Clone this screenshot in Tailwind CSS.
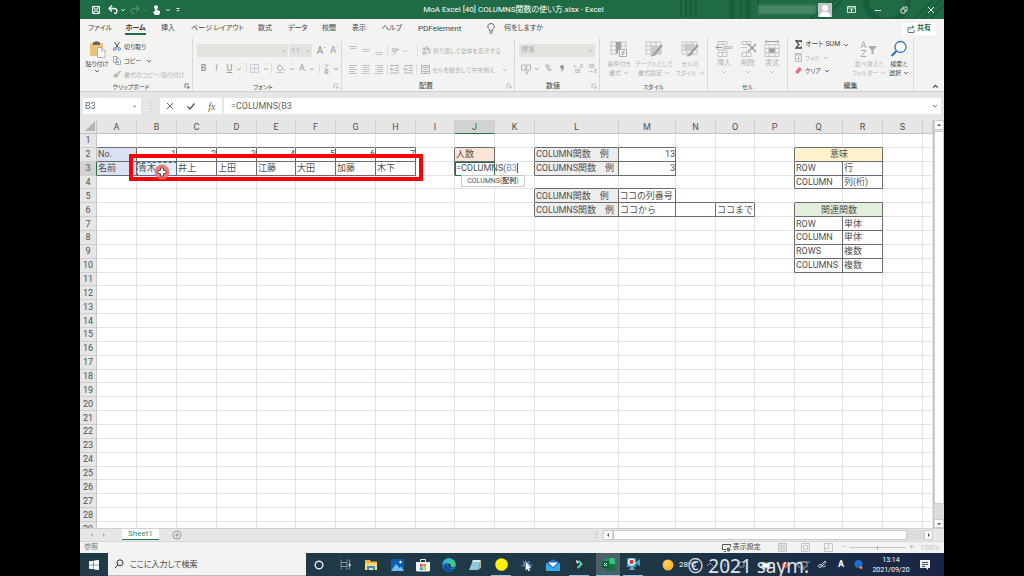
<!DOCTYPE html>
<html lang="ja">

<head>
    <meta charset="UTF-8">
    <meta name="viewport" content="width=device-width, initial-scale=1.0">
    <title>MoA Excel [40] COLUMNS関数の使い方.xlsx - Excel</title>
    <script src="https://cdn.jsdelivr.net/npm/@tailwindcss/browser@4"></script>
</head>

<body class="bg-black">

    <!-- Shared icons -->
    <svg class="hidden">
        <symbol id="chev" viewBox="0 0 6 6"><path d="M1 2l2 2 2-2" fill="none" stroke="currentColor" stroke-width=".8" /></symbol>
        <symbol id="launch" viewBox="0 0 6 6"><path d="M1 5V1h4M3 3l2 2M5 3v2H3" fill="none" stroke="currentColor" stroke-width=".8" /></symbol>
        <symbol id="grid" viewBox="0 0 18 18"><path d="M1 2h15v12H1zM1 6h15M1 10h15M6 2v12M11 2v12" fill="#f4f2f4" stroke="#c4c2c4" stroke-width="1" /></symbol>
        <symbol id="brush" viewBox="0 0 18 18"><path d="M17 5l-6 7" stroke="#8f8f8f" stroke-width="1.6" /><path d="M11 11c-3 0-3 4-6 5 3 1 7 0 7-4z" fill="#a9a7a9" /></symbol>
    </svg>

    <div class="relative mx-20 flex h-screen flex-col overflow-hidden bg-[#e6e6e6] font-['Roboto','Noto_Sans_CJK_JP',sans-serif] text-[7px] leading-[9px] text-[#444]">

        <!-- Title bar -->
        <header class="relative flex h-[19px] shrink-0 items-center bg-[#1e6b46] text-white">
            <svg class="absolute right-0 top-0 h-full w-[270px]" viewBox="0 0 270 19" fill="none" stroke="#195c3b" preserveAspectRatio="none">
                <path d="M7 0v17M12 0v17M17 0v17M22 0v17M67 0v19M84 0v12" stroke-width="2" />
                <path d="M58 0v19M74 0v19" stroke-width="5" />
                <path d="M137 19l19-19M143 19l19-19M149 19l19-19M240 19l19-19M248 19l19-19M256 19l14-14" stroke-width="2" />
                <path d="M192 0a20 20 0 0 0 42 0" stroke-width="6" />
            </svg>
            <div class="flex flex-1 items-center gap-1 pl-3">
                <button aria-label="上書き保存"><svg class="h-2 w-2" viewBox="0 0 8 8" fill="none" stroke="currentColor"><path d="M.5.5h7v7h-7zM2 1v2h4V1M2 7.500V5h4v2.500" /></svg></button>
                <button aria-label="元に戻す" class="ml-1 flex items-center"><svg class="h-[9px] w-[10px]" viewBox="0 0 10 9" fill="none" stroke="currentColor" stroke-width="1.300"><path d="M4 .5L1 3.500l3 3M1.500 3.500H6c4 0 4 5 0 5" /></svg><svg class="ml-0.5 size-[6px]"><use href="#chev" /></svg></button>
                <button aria-label="やり直し" class="flex items-center text-[#4d8d6c]"><svg class="h-[9px] w-[10px]" viewBox="0 0 10 9" fill="none" stroke="currentColor" stroke-width="1.300"><path d="M6 .5l3 3-3 3M8.500 3.500H4c-4 0-4 5 0 5" /></svg><svg class="ml-0.5 size-[6px]"><use href="#chev" /></svg></button>
                <button aria-label="タッチ" class="flex items-center"><svg class="h-[10px] w-[9px]" viewBox="0 0 9 10" fill="currentColor"><circle cx="4" cy="2.200" r="2" /><path d="M3 2h2v3l3 1v2l-1 2H3L1 7l2-1z" /></svg><svg class="ml-1 size-[6px]"><use href="#chev" /></svg></button>
                <button aria-label="カスタマイズ"><svg class="size-[6px]" viewBox="0 0 6 6" fill="currentColor"><path d="M1.500 1h3v1h-3zM1.500 3h3L3 4.500z" /></svg></button>
            </div>
            <h1 class="relative whitespace-nowrap text-[8px] [font-feature-settings:'palt']">MoA Excel [40] COLUMNS関数の使い方.xlsx - Excel</h1>
            <div class="relative flex flex-1 items-center justify-end pr-[9px]">
                <div class="h-[9px] w-[58px] bg-[#4a8668] blur-[1px]"></div>
                <svg class="ml-[2px] size-[14px]" viewBox="0 0 14 14"><path d="M0 0h14v14H0z" fill="#c4c4c4" /><circle cx="7" cy="5" r="3" fill="#fff" /><path d="M1.500 14c0-7 11-7 11 0z" fill="#fff" /></svg>
                <button aria-label="リボンの表示" class="ml-[15px]"><svg class="size-[9px]" viewBox="0 0 9 9" fill="none" stroke="currentColor"><path d="M.5 1.500h8v6h-8zM.5 3h8M4.500 7V4M3 5.500L4.500 4 6 5.500" stroke-width=".8" /></svg></button>
                <button aria-label="最小化" class="ml-[18px]"><svg class="size-[8px]" viewBox="0 0 8 8" stroke="currentColor"><path d="M1 4.500h6" /></svg></button>
                <button aria-label="元のサイズ" class="ml-[18px]"><svg class="size-[8px]" viewBox="0 0 8 8" fill="none" stroke="currentColor"><path d="M1 3h4v4H1zM3 3V1h4v4H5" stroke-width=".8" /></svg></button>
                <button aria-label="閉じる" class="ml-[19px]"><svg class="size-[8px]" viewBox="0 0 8 8" stroke="currentColor"><path d="M1 1l6 6M7 1L1 7" /></svg></button>
            </div>
        </header>

        <!-- Ribbon tabs -->
        <nav class="flex h-[19px] shrink-0 items-center bg-[#f3f3f1] pl-2 pr-2">
            <div class="grid flex-1 grid-cols-[37px_36px_30px_67px_30px_34px_30px_30px_36px_69px_17px_auto] items-center whitespace-nowrap text-[7px] [font-feature-settings:'palt']">
                <a href="#">ファイル</a>
                <a href="#" class="relative w-[21px] text-center font-bold text-[#333] after:absolute after:-bottom-[2px] after:left-0 after:h-[2px] after:w-full after:bg-[#1e6b46]">ホーム</a>
                <a href="#">挿入</a>
                <a href="#">ページ レイアウト</a>
                <a href="#">数式</a>
                <a href="#">データ</a>
                <a href="#">校閲</a>
                <a href="#">表示</a>
                <a href="#">ヘルプ</a>
                <a href="#" class="text-[8px]">PDFelement</a>
                <svg class="h-[11px] w-[8px]" viewBox="0 0 8 11" fill="none" stroke="#555" stroke-width=".9"><path d="M2.500 8V6.500C-.8 4 1 .6 4 .6s4.800 3.400 1.500 5.900V8zM2.500 10h3" /></svg>
                <a href="#">何をしますか</a>
            </div>
            <button class="flex h-3 w-[34px] items-center justify-center gap-[2px] bg-white font-bold text-[#1e6b46]">
                <svg class="size-[8px]" viewBox="0 0 8 8" fill="none" stroke="currentColor" stroke-width=".8"><path d="M3 2.500H1v5h6V5M3 5c0-2 1-3 4-3M5 .5L7 2 5 3.500" /></svg>共有
            </button>
        </nav>

        <!-- Ribbon -->
        <section class="relative flex h-[54px] shrink-0 whitespace-nowrap border-b border-[#d0d0d0] bg-[#f3f3f1] text-[6px] text-[#b3b1b3] [font-feature-settings:'palt']">
            <!-- Clipboard -->
            <div class="relative flex w-[113px] flex-col border-r border-[#d8d8d6]">
                <div class="flex flex-1 gap-1 pl-[5px] pt-[2px]">
                    <button class="flex w-6 flex-col items-center text-[#444]">
                        <svg class="h-[18px] w-[17px]" viewBox="0 0 17 18"><path d="M1 3h13v13H1z" fill="#efc27a" /><path d="M4 2h2a1.600 1.600 0 0 1 3 0h2v3H4z" fill="#666" /><path d="M8.500 7.500h4l3.500 3.500v6.500H8.500z" fill="#fff" stroke="#999" stroke-width=".7" /><path d="M12.500 7.500V11H16" fill="none" stroke="#999" stroke-width=".7" /></svg>
                        <span class="mt-px">貼り付け</span>
                        <svg class="size-[6px]"><use href="#chev" /></svg>
                    </button>
                    <div class="flex flex-col gap-[5px] pt-[2px]">
                        <button class="flex items-center gap-[3px] text-[#444]"><svg class="h-[9px] w-2" viewBox="0 0 8 9" fill="none"><path d="M1.500 0l4 6M6.500 0l-4 6" stroke="#555" /><circle cx="1.800" cy="7" r="1.300" stroke="#4a8ac6" /><circle cx="6.200" cy="7" r="1.300" stroke="#4a8ac6" /></svg>切り取り</button>
                        <button class="flex items-center gap-[3px] text-[#444]"><svg class="h-[9px] w-2" viewBox="0 0 8 9" fill="#fff" stroke="#7d8a97" stroke-width=".7"><path d="M.5.5H4v6H.5zM3 2.500h2.500l2 2v4H3z" /><path d="M4 5.500h2M4 7h2" stroke="#4a8ac6" /></svg>コピー<svg class="ml-[2px] size-[6px]"><use href="#chev" /></svg></button>
                        <button class="flex items-center gap-[3px]"><svg class="h-[9px] w-2" viewBox="0 0 8 9"><path d="M7.500 1l-3 3" stroke="#aaa" stroke-width="1.500" /><path d="M3 3l3 2.500L3 8 0 6z" fill="#b5b5b5" /></svg>書式のコピー/貼り付け</button>
                    </div>
                </div>
                <div class="pr-[10px] text-center text-[#444]">クリップボード</div>
                <svg class="absolute bottom-[2px] right-[2px] size-[6px] text-[#555]"><use href="#launch" /></svg>
            </div>

            <!-- Font -->
            <div class="relative flex w-[149px] flex-col border-r border-[#d8d8d6]">
                <div class="flex flex-1 flex-col gap-[6px] pl-[4px] pt-[6px]">
                    <div class="flex h-[13px] items-center">
                        <select aria-label="フォント" class="h-[13px] w-[92px] appearance-none border-r border-[#f3f3f1] bg-[#e3e2de]"><option></option></select>
                        <svg class="-ml-[8px] mr-[2px] size-[6px]"><use href="#chev" /></svg>
                        <select aria-label="サイズ" class="h-[13px] w-[23px] appearance-none bg-[#e3e2de] pl-[2px] text-[8px]"><option>11</option></select>
                        <svg class="-ml-[7px] size-[6px]"><use href="#chev" /></svg>
                        <button class="ml-[4px] w-[13px] text-[10px] text-[#8f8f8f]">A<sup class="text-[6px]">ˆ</sup></button>
                        <button class="w-[13px] text-[9px] text-[#8f8f8f]">A<sup class="text-[6px]">ˇ</sup></button>
                    </div>
                    <div class="flex h-[11px] items-center text-[9px] text-[#999]">
                        <button class="w-[13px] font-bold">B</button>
                        <button class="w-[13px] italic">I</button>
                        <button class="w-[13px] underline">U</button>
                        <svg class="size-[6px]"><use href="#chev" /></svg>
                        <i class="ml-1 h-[11px] w-px bg-[#ddd]"></i>
                        <button aria-label="罫線" class="ml-[3px] flex items-center gap-1"><svg class="size-[9px]" viewBox="0 0 9 9" fill="none" stroke="#c9c5d2"><path d="M.5.5h8v8h-8zM4.500.5v8M.5 4.500h8" stroke-width=".9" /></svg><svg class="size-[6px]"><use href="#chev" /></svg></button>
                        <i class="ml-[2px] h-[11px] w-px bg-[#ddd]"></i>
                        <button aria-label="塗りつぶし" class="ml-1 flex items-center gap-1"><svg class="size-[9px]" viewBox="0 0 9 9" fill="none" stroke="#aaa"><path d="M1 4l3-3 3 3-3 3zM2.500 2V.5M8 5v2" /><path d="M0 8.500h8" stroke="#ccc" /></svg><svg class="size-[6px]"><use href="#chev" /></svg></button>
                        <button class="ml-1 flex items-center gap-1">A<svg class="size-[6px]"><use href="#chev" /></svg></button>
                        <i class="ml-1 h-[11px] w-px bg-[#ddd]"></i>
                        <button class="ml-1 flex items-center gap-1 text-[5px] leading-[5px] text-[#888]"><span>ア<br>亜</span><svg class="size-[6px]"><use href="#chev" /></svg></button>
                    </div>
                </div>
                <div class="pr-2 text-center text-[#444]">フォント</div>
                <svg class="absolute bottom-[2px] right-[2px] size-[6px]"><use href="#launch" /></svg>
            </div>

            <!-- Alignment -->
            <div class="relative flex w-[173px] flex-col border-r border-[#d8d8d6]">
                <div class="flex flex-1 flex-col gap-2 pl-[7px] pt-[7px]">
                    <div class="flex h-[11px] items-center">
                        <svg class="h-[11px] w-[38px]" viewBox="0 0 38 11" stroke="#b5b5b5" fill="none"><path d="M0 1.500h8M1 3.500h6M13 4.500h8M14 6.500h6M26 7.500h8M27 9.500h6" stroke-width=".8" /></svg>
                        <i class="h-[11px] w-px bg-[#ddd]"></i>
                        <button aria-label="方向" class="ml-[3px] flex items-center gap-[2px]"><svg class="size-[9px]" viewBox="0 0 9 9" fill="none" stroke="#aaa"><circle cx="2.500" cy="4" r="1.500" /><path d="M2 8.500l6-6M5 2l1.500 3" /></svg><svg class="size-[6px]"><use href="#chev" /></svg></button>
                        <i class="ml-[9px] h-[11px] w-px bg-[#ddd]"></i>
                        <button class="ml-[4px] flex items-center gap-[2px]"><svg class="size-[9px]" viewBox="0 0 9 9" fill="none" stroke="#aaa" stroke-width=".9"><circle cx="1.800" cy="3" r="1.200" /><path d="M3 1.500v3M5 0v4h2V2H5M1 6h3v2H1zM8 4v3H5.500" /></svg>折り返して全体を表示する</button>
                    </div>
                    <div class="flex h-[11px] items-center">
                        <svg class="h-[11px] w-[38px]" viewBox="0 0 38 11" stroke="#b5b5b5" fill="none"><path d="M0 1.500h8M0 3.500h6M0 5.500h8M0 7.500h6M0 9.500h8M13 1.500h8M14 3.500h6M13 5.500h8M14 7.500h6M13 9.500h8M26 1.500h8M28 3.500h6M26 5.500h8M28 7.500h6M26 9.500h8" stroke-width=".8" /></svg>
                        <i class="h-[11px] w-px bg-[#ddd]"></i>
                        <svg class="ml-[2px] h-[9px] w-[24px]" viewBox="0 0 24 9" stroke="#aaa" fill="none"><path d="M0 .5h9M5 3h4M5 5.500h4M0 8h9M4 4.250H0l2-2M0 4.250l2 2M14 .5h9M19 3h4M19 5.500h4M14 8h9M13 4.250h4l-2-2M17 4.250l-2 2" stroke-width=".9" /></svg>
                        <i class="ml-[2px] h-[11px] w-px bg-[#ddd]"></i>
                        <button class="ml-[4px] flex items-center gap-[2px]"><svg class="size-[9px]" viewBox="0 0 9 9" fill="none" stroke="#aaa6b5" stroke-width=".8"><path d="M.5.5h8v8h-8zM.5 2.500h8M.5 6.500h8M4.500.5v2M4.500 6.500v2M2 4.500h5" /></svg>セルを結合して中央揃え<svg class="ml-[5px] size-[6px]"><use href="#chev" /></svg></button>
                    </div>
                </div>
                <div class="pr-1 text-center text-[7px] text-[#444]">配置</div>
                <svg class="absolute bottom-[2px] right-[2px] size-[6px]"><use href="#launch" /></svg>
            </div>

            <!-- Number -->
            <div class="relative flex w-[85px] flex-col border-r border-[#d8d8d6]">
                <div class="flex flex-1 flex-col gap-[6px] px-[4px] pt-[6px]">
                    <div class="flex h-[13px] items-center">
                        <select aria-label="表示形式" class="h-[13px] w-full appearance-none bg-[#e3e2de] pl-[2px] text-[7px]"><option>標準</option></select>
                        <svg class="-ml-[8px] size-[6px] shrink-0"><use href="#chev" /></svg>
                    </div>
                    <div class="flex h-[11px] items-center text-[9px] text-[#999]">
                        <button aria-label="通貨" class="ml-[2px] flex items-center gap-[3px]"><svg class="size-[10px]" viewBox="0 0 10 10" fill="none" stroke="#aaa" stroke-width=".9"><path d="M.5 1h9v5h-9z" /><circle cx="5" cy="3.500" r="1.200" /><path d="M4 8h4M5 9.500h2" /></svg><svg class="size-[6px]"><use href="#chev" /></svg></button>
                        <button class="ml-[5px]">%</button>
                        <button aria-label="桁区切り" class="ml-[8px]"><svg class="h-[7px] w-[4px]" viewBox="0 0 4 7"><path d="M0 2a2 2 0 1 1 4 0c0 2-1 4-3 5l1-3a2 2 0 0 1-2-2z" fill="#999" /></svg></button>
                        <i class="ml-[6px] h-[11px] w-px bg-[#ddd]"></i>
                        <button class="ml-1 text-left text-[5px] leading-[5px]">←.0<br>.00</button>
                        <button class="ml-[5px] text-left text-[5px] leading-[5px]">.00<br>→.0</button>
                    </div>
                </div>
                <div class="pr-2 text-center text-[7px] text-[#444]">数値</div>
                <svg class="absolute bottom-[2px] right-[2px] size-[6px]"><use href="#launch" /></svg>
            </div>

            <!-- Styles -->
            <div class="flex w-[108px] flex-col border-r border-[#d8d8d6]">
                <div class="grid flex-1 grid-cols-[32px_38px_34px] pl-[3px] pt-[2px]">
                    <button class="flex flex-col items-center"><svg class="size-[18px]" viewBox="0 0 18 18"><use href="#grid" /><path d="M6 2h5v8H8v3H6z" fill="#a3a1a3" /><path d="M9.500 9.500h7v7h-7z" fill="#fff" stroke="#aaa" /><path d="M11 12h4M11 14h4M14 10.500l-2 5" stroke="#999" stroke-width=".8" /></svg><span class="mt-px">条件付き</span><span class="flex items-center gap-[2px]">書式<svg class="size-[6px]"><use href="#chev" /></svg></span></button>
                    <button class="flex flex-col items-center"><svg class="size-[18px]" viewBox="0 0 18 18"><use href="#grid" /><path d="M6 6h10v8H6z" fill="#cbc9cb" /><use href="#brush" /></svg><span class="mt-px">テーブルとして</span><span class="flex items-center gap-[2px]">書式設定<svg class="size-[6px]"><use href="#chev" /></svg></span></button>
                    <button class="flex flex-col items-center"><svg class="size-[18px]" viewBox="0 0 18 18"><use href="#grid" /><path d="M3 4h11v7H3z" fill="#cbc9cb" /><use href="#brush" /></svg><span class="mt-px">セルの</span><span class="flex items-center gap-[2px]">スタイル<svg class="size-[6px]"><use href="#chev" /></svg></span></button>
                </div>
                <div class="text-center text-[#444]">スタイル</div>
            </div>

            <!-- Cells -->
            <div class="flex w-[80px] flex-col border-r border-[#d8d8d6]">
                <div class="grid flex-1 grid-cols-[24px_24px_24px] pl-[4px] pt-[2px]">
                    <button class="flex flex-col items-center"><svg class="size-[18px]" viewBox="0 0 18 18" fill="none" stroke="#c4c4c4"><path d="M3 1.500h9v3H3zM7.500 1.500v3M3 12.500h9v4H3zM7.500 10v6.500M3 10h9v2.500" /><path d="M8 6.500h9v2H8z" fill="#ddd" /><path d="M7 7.500H1l3-3M1 7.500l3 3" stroke="#999" /></svg><span class="mt-px text-[7px]">挿入</span><svg class="mt-px size-[6px]"><use href="#chev" /></svg></button>
                    <button class="flex flex-col items-center"><svg class="size-[18px]" viewBox="0 0 18 18" fill="none" stroke="#c4c4c4"><path d="M3 1.500h9v3H3zM7.500 1.500v3M3 12.500h9v4H3zM7.500 10v6.500M1 7.500h7" /><path d="M9 4l8 8M17 4l-8 8" stroke="#999" stroke-width="1.300" /></svg><span class="mt-px text-[7px]">削除</span><svg class="mt-px size-[6px]"><use href="#chev" /></svg></button>
                    <button class="flex flex-col items-center"><svg class="size-[18px]" viewBox="0 0 18 18" fill="none" stroke="#c4c4c4"><path d="M2 4.500h14v12H2zM2 8.500h14M2 12.500h14M6 4.500v12M12 4.500v12" /><path d="M3 1.500h12M3 0v3M15 0v3" stroke="#999" /><path d="M6 8h6v5H6z" fill="#999" /></svg><span class="mt-px text-[7px]">書式</span><svg class="mt-px size-[6px]"><use href="#chev" /></svg></button>
                </div>
                <div class="text-center text-[#444]">セル</div>
            </div>

            <!-- Editing -->
            <div class="flex w-[126px] flex-col border-r border-[#d8d8d6]">
                <div class="flex flex-1 pl-[7px] pt-[2px]">
                    <div class="flex w-[58px] flex-col gap-1">
                        <button class="flex items-center gap-[3px] text-[7px] text-[#444]"><svg class="h-[9px] w-[7px]" viewBox="0 0 7 9" fill="none" stroke="#444" stroke-width="1.300"><path d="M6.500 2.500V1H1l3 3.500L1 8h5.500V6.500" /></svg>オート SUM<svg class="size-[6px]"><use href="#chev" /></svg></button>
                        <button class="flex items-center gap-[3px]"><svg class="h-[9px] w-[7px]" viewBox="0 0 7 9" fill="none" stroke="#aaa" stroke-width=".8"><path d="M.5.5h6v8h-6zM.5 2h6M3.500 3v4M2 5.500L3.500 7 5 5.500" /></svg>フィル<svg class="size-[6px]"><use href="#chev" /></svg></button>
                        <button class="flex items-center gap-[3px] text-[#444]"><svg class="h-[9px] w-[7px]" viewBox="0 0 7 9"><path d="M4 1l3 2-4 5-3-2z" fill="#e8707c" /></svg>クリア<svg class="size-[6px]"><use href="#chev" /></svg></button>
                    </div>
                    <button class="flex w-[32px] flex-col items-center"><svg class="size-[18px]" viewBox="0 0 18 18" fill="none" stroke="#aaa"><path d="M1 8l2.500-6.500L6 8M2 6h3M1 10.500h5l-5 6h5" /><path d="M8 6h9l-3.500 4v4h-2v-4z" fill="#aaa" stroke="none" /></svg><span class="mt-px">並べ替えと</span><span class="flex items-center gap-[2px]">フィルター<svg class="size-[6px]"><use href="#chev" /></svg></span></button>
                    <button class="flex w-[28px] flex-col items-center text-[#444]"><svg class="size-[18px]" viewBox="0 0 18 18" fill="none" stroke="#3475ba"><circle cx="10.500" cy="7" r="5.500" fill="#fbfdff" stroke-width="1.300" /><path d="M6.500 11L1.500 16" stroke-width="2.200" /></svg><span class="mt-px">検索と</span><span class="flex items-center gap-[2px]">選択<svg class="size-[6px]"><use href="#chev" /></svg></span></button>
                </div>
                <div class="text-center text-[7px] text-[#444]">編集</div>
            </div>
            <button aria-label="リボンを折りたたむ" class="absolute bottom-[1px] right-[5px]"><svg class="size-[7px]" viewBox="0 0 6 6" fill="none" stroke="#444"><path d="M1 4l2-2 2 2" /></svg></button>
        </section>

        <!-- Formula bar -->
        <div class="flex h-[28px] shrink-0 items-center gap-[2px] px-[3px] text-[9px] text-[#666]">
            <div class="flex h-[16px] w-[58px] items-center bg-white pr-1">
                <input aria-label="名前ボックス" value="B3" class="w-full min-w-0 pl-[2px] outline-none">
                <svg class="size-[5px] shrink-0" viewBox="0 0 6 6" fill="#888"><path d="M1 2h4L3 4.500z" /></svg>
            </div>
            <span class="w-[15px] text-center text-[#aaa]">⋮</span>
            <div class="flex h-[16px] w-[62px] items-center justify-around bg-white">
                <button aria-label="キャンセル"><svg class="size-[8px]" viewBox="0 0 8 8" stroke="#666"><path d="M1 1l6 6M7 1L1 7" /></svg></button>
                <button aria-label="入力"><svg class="size-[8px]" viewBox="0 0 8 8" fill="none" stroke="#555" stroke-width="1.300"><path d="M.5 4.500L3 7l4.500-5.500" /></svg></button>
                <button class="font-['Liberation_Serif',serif] text-[10px] italic">fx</button>
            </div>
            <div class="flex h-[16px] flex-1 items-center bg-white pr-[3px]">
                <input aria-label="数式バー" value="=COLUMNS(B3" class="min-w-0 flex-1 pl-[7px] outline-none">
                <svg class="size-[6px] text-[#555]"><use href="#chev" /></svg>
            </div>
        </div>

        <!-- Worksheet -->
        <main class="flex min-h-0 flex-1">
            <div class="relative min-w-0 flex-1 overflow-hidden bg-white">
                <table class="h-[416px] w-full table-fixed border-separate border-spacing-0 text-[9px] leading-[12px] text-[#505050]">
                    <colgroup>
                        <col class="w-[17px]"><col class="w-[40px]"><col class="w-[40px]"><col class="w-[40px]"><col class="w-[40px]">
                        <col class="w-[39px]"><col class="w-[40px]"><col class="w-[40px]"><col class="w-[40px]"><col class="w-[39px]">
                        <col class="w-[40px]"><col class="w-[40px]"><col class="w-[84px]"><col class="w-[57px]"><col class="w-[40px]">
                        <col class="w-[39px]"><col class="w-[40px]"><col class="w-[48px]"><col class="w-[40px]"><col class="w-[40px]"><col>
                    </colgroup>
                    <thead id="head"></thead>
                    <tbody id="rows"></tbody>
                </table>

                <!-- Argument hint -->
                <div class="absolute left-[381px] top-[55px] h-3 w-[64px] border border-[#c8c8c8] bg-white text-center text-[7px] leading-[10px] text-[#555]">COLUMNS(<b>配列</b>)</div>
                <!-- Highlight frame and pointer -->
                <div class="absolute left-[49px] top-[34px] h-[27px] w-[294px] border-4 border-[#fb0007]"></div>
                <svg class="absolute left-[74px] top-[44px] size-4" viewBox="0 0 16 16"><circle cx="8" cy="8" r="7.500" fill="#ee6f6c" opacity=".9" /><path d="M6.500 4h3v2.500H12v3H9.500V12h-3V9.500H4v-3h2.500z" fill="#fff" stroke="#444" stroke-width=".8" /></svg>
            </div>

            <!-- Vertical scrollbar -->
            <div class="flex w-[11px] flex-col border-l border-[#c8c8c8] bg-[#dcdcdc] text-[#666]">
                <button aria-label="上へ" class="flex h-[10px] items-center justify-center border border-[#ccc] bg-white"><svg class="size-[6px]" viewBox="0 0 6 6" fill="currentColor"><path d="M1 4h4L3 1.500z" /></svg></button>
                <div class="mt-px flex-1 border border-[#ccc] bg-white"></div>
                <div class="h-[15px]"></div>
                <button aria-label="下へ" class="flex h-[9px] items-center justify-center border border-[#ccc] bg-white"><svg class="size-[6px]" viewBox="0 0 6 6" fill="currentColor"><path d="M1 2h4L3 4.500z" /></svg></button>
            </div>
        </main>

        <!-- Sheet tabs -->
        <div class="flex h-[13px] shrink-0 items-center border-t border-[#cfcfcf]">
            <div class="flex w-[42px] items-center gap-[6px] pl-[9px] text-[#aaa]">
                <svg class="size-[6px]" viewBox="0 0 6 6" fill="currentColor"><path d="M4 1v4L2 3z" /></svg>
                <svg class="size-[6px]" viewBox="0 0 6 6" fill="currentColor"><path d="M2 1v4l2-2z" /></svg>
            </div>
            <button class="h-[11px] w-[37px] self-start border-b border-[#1e7b4e] bg-white text-[8px] leading-[10px] text-[#3d8f66]">Sheet1</button>
            <button aria-label="新しいシート" class="ml-[13px]"><svg class="size-[10px]" viewBox="0 0 10 10" fill="none" stroke="#888" stroke-width=".8"><circle cx="5" cy="5" r="4" /><path d="M5 3v4M3 5h4" /></svg></button>
            <span class="flex-1 pr-[3px] text-right text-[#888]">⋮</span>
            <div class="flex h-[10px] w-[330px] bg-[#dcdcdc] text-[#555]">
                <button aria-label="左へ" class="flex w-[10px] items-center justify-center border border-[#ccc] bg-white"><svg class="size-[6px]" viewBox="0 0 6 6" fill="currentColor"><path d="M4 1v4L2 3z" /></svg></button>
                <div class="flex-1 border border-[#ccc] bg-white"></div>
                <div class="w-[17px]"></div>
                <button aria-label="右へ" class="flex w-[9px] items-center justify-center border border-[#ccc] bg-white"><svg class="size-[6px]" viewBox="0 0 6 6" fill="currentColor"><path d="M2 1v4l2-2z" /></svg></button>
            </div>
            <div class="w-[11px]"></div>
        </div>

        <!-- Status bar -->
        <div class="flex h-3 shrink-0 items-center border-t border-[#d5d5d3] bg-[#f3f3f1] pl-[4px] pr-[4px]">
            <span class="flex-1 text-[#777]">参照</span>
            <button class="flex items-center gap-[2px] text-[#444]"><svg class="size-[9px]" viewBox="0 0 9 9" fill="none" stroke="#444" stroke-width=".9"><path d="M4 6.500H.5v-5h8V4M2 8.500h2" /><circle cx="6.500" cy="6.500" r="1.500" fill="#888" /></svg>表示設定</button>
            <svg class="ml-[17px] h-[9px] w-[56px]" viewBox="0 0 56 9" fill="none" stroke="#bbb"><path d="M.5.5h8v8h-8zM3.200.5v8M6 .5v8M.5 3.200h8M.5 6h8M23.500.5h8v8h-8zM25.500 2.500h4v4h-4zM46.500.5h8v8h-8zM46.500 5.500h4v-5" stroke-width=".8" /></svg>
            <span class="ml-[8px] text-[9px] text-[#bbb]">−</span>
            <input type="range" aria-label="ズーム" class="mx-[3px] h-px w-[56px] appearance-none bg-[#c4c4c4] [&::-webkit-slider-thumb]:h-1 [&::-webkit-slider-thumb]:w-px [&::-webkit-slider-thumb]:appearance-none [&::-webkit-slider-thumb]:bg-[#aaa]">
            <span class="text-[9px] text-[#bbb]">+</span>
            <span class="ml-[6px] w-[20px] text-[8px] text-[#c4c4c4]">100%</span>
        </div>

        <!-- Taskbar -->
        <footer class="relative flex h-[23px] shrink-0 items-center bg-linear-to-r from-[#1f3a46] from-60% to-[#1a2545] text-white">
            <button aria-label="スタート" class="flex w-[28px] justify-center"><svg class="size-[10px]" viewBox="0 0 10 10" fill="#fff"><path d="M0 1.300l4.500-.6v4H0zM5 .6L10 0v4.700H5zM0 5.300h4.500v4L0 8.700zM5 5.300h5V10l-5-.6z" /></svg></button>
            <label class="flex h-full w-[198px] items-center gap-[6px] border-b border-[#bbb] bg-[#f2f2f2] pl-[6px]">
                <svg class="size-[10px]" viewBox="0 0 10 10" fill="none" stroke="#333"><circle cx="6" cy="3.800" r="3" /><path d="M3.800 6L.8 9.300" /></svg>
                <input aria-label="検索" placeholder="ここに入力して検索" class="min-w-0 flex-1 text-[8px] placeholder:text-[#444] [font-feature-settings:'palt']">
            </label>
            <div class="flex h-full">
                <button aria-label="Cortana" class="flex w-[26px] items-center justify-center"><svg class="size-[10px]" viewBox="0 0 10 10"><circle cx="5" cy="5" r="3.800" fill="none" stroke="#e8e8e8" stroke-width="1.400" /></svg></button>
                <button aria-label="タスクビュー" class="flex w-[26px] items-center justify-center"><svg class="size-[11px]" viewBox="0 0 11 11" fill="none" stroke="#aab4b8"><path d="M1 3.500h6v4H1zM1 .5v2M7 .5v2M1 8.500v2M7 8.500v2M9.500.5v10" stroke-width=".8" /><path d="M9 5h1.500v2H9z" fill="#fff" /></svg></button>
                <button aria-label="エクスプローラー" class="flex w-[26px] items-center justify-center"><svg class="h-[12px] w-[14px]" viewBox="0 0 14 12"><path d="M1 1h5l1 1.500h6V11H1z" fill="#eeb53e" /><path d="M1 4h12v7H1z" fill="#ffd97a" /><path d="M3 7h8v4H9V9H5v2H3z" fill="#3a90d4" /></svg></button>
                <button aria-label="フォト" class="flex w-[26px] items-center justify-center"><svg class="h-[12px] w-[13px]" viewBox="0 0 13 12"><path d="M0 0h13v12H0z" fill="#0e5dae" /><path d="M0 12l5-7 3.500 4L10 7.500l3 4.500z" fill="#6cc0f2" /><circle cx="9.500" cy="3" r="1.200" fill="#fff" /></svg></button>
                <button aria-label="ストア" class="flex w-[26px] items-center justify-center"><svg class="size-[14px]" viewBox="0 0 14 14"><path d="M4.500 4V1.500h5V4" fill="none" stroke="#eee" /><path d="M0 4h14v8.500l-1 1H1l-1-1z" fill="#f6f6f6" /><path d="M4 6h2.700v2.700H4z" fill="#e8532b" /><path d="M7.300 6H10v2.700H7.300z" fill="#7eb526" /><path d="M4 9.300h2.700V12H4z" fill="#20a0e0" /><path d="M7.300 9.300H10V12H7.300z" fill="#f7b81c" /></svg></button>
                <button aria-label="Edge" class="flex w-[26px] items-center justify-center"><svg class="size-[14px]" viewBox="0 0 14 14"><circle cx="7" cy="7" r="6.800" fill="#1678cc" /><path d="M.5 6C2-1.500 13-1 13.800 6.500c0 3-4 3.500-5.300 2C9.500 6 6 3 .5 6z" fill="#45c98a" /><path d="M.5 6C1.500 1 6 0 8 .3 13 2 6 3.500 4.500 5 3 5 1.500 5.500.5 6z" fill="#2fb4d8" /><path d="M5 7c0 3 3 5.500 7 4-3 4-10 2-10-2 0-2 3-4 3-2z" fill="#0d4a96" /><path d="M6 6.500c2-1.500 3.500.5 2.500 2 1 1.500 3 1 4 .5-1 1.500-6.500 2-6.500-2.500z" fill="#1f3a46" /></svg></button>
                <button aria-label="メモ帳" class="flex w-[26px] items-center justify-center"><svg class="size-[12px]" viewBox="0 0 12 12"><path d="M4 1h8l-3 10H0z" fill="#8fc8dc" /><path d="M4 1h8l-1 2H3z" fill="#d9e4e6" /><path d="M9 11l3-10v8z" fill="#c5b98a" /></svg></button>
                <button aria-label="マーカー" class="flex w-[26px] items-center justify-center"><span class="flex h-full w-5 items-center justify-center border-b border-[#8ec6ea]"><svg class="size-[13px]" viewBox="0 0 13 13"><circle cx="6.500" cy="6.500" r="6.300" fill="#fff200" /></svg></span></button>
                <button aria-label="ランチャー" class="flex w-[26px] items-center justify-center"><svg class="size-[12px]" viewBox="0 0 12 12"><path d="M4 0l1.500 3L9 2 8 5l4 1-3 2 1 3-3-1-3 2V8L0 7l3-2-2-3 3 1z" fill="#5d7fc6" /><path d="M5 3l5 6H7.500L9 12l-1.500.5-1-3L5 11z" fill="#fff" /></svg></button>
                <button aria-label="メール" class="flex w-[26px] items-center justify-center"><svg class="size-[14px]" viewBox="0 0 14 14"><path d="M0 5l7-4 7 4v8H0z" fill="#1668b8" /><path d="M2 4.500h10L7 9z" fill="#fff" /><path d="M0 5l7 5 7-5v8H0z" fill="#35aaf0" /></svg></button>
                <button aria-label="Filmora" class="flex w-[26px] items-center justify-center"><span class="flex h-full w-5 items-center justify-center border-b border-[#8ec6ea]"><svg class="size-[12px]" viewBox="0 0 12 12"><path d="M0 0h12v12H0z" fill="#263238" /><path d="M3 2l3 1.500L4 6z" fill="#fff" /><path d="M6 2l4 4-5 5-1-2 3-3-2-2z" fill="#3edcc0" /></svg></span></button>
                <button aria-label="Excel" class="ml-1 flex w-[24px] items-center justify-center border-b border-[#8ec6ea] bg-[#4b6069]"><svg class="size-[13px]" viewBox="0 0 13 13"><path d="M3 0h10v13H3z" fill="#1f9a5c" /><path d="M8 0h5v6H8z" fill="#33c481" /><path d="M3 6h10v7H3z" fill="#17704a" /><path d="M0 3h7v7H0z" fill="#0f6138" /><path d="M2 5l3 3M5 5L2 8" stroke="#fff" /></svg></button>
                <button aria-label="レコーダー" class="flex w-[26px] items-center justify-center"><span class="flex h-full w-5 items-center justify-center border-b border-[#8ec6ea]"><svg class="size-[14px]" viewBox="0 0 14 14"><path d="M1 1h9v9H1zM10 5l4-3v7l-4-2z" fill="#3ea5cf" /><circle cx="5.500" cy="5" r="3.500" fill="#fff" /><circle cx="5.500" cy="5" r="2.200" fill="#e2372b" /><path d="M3 13l2-3h2l2 3z" fill="#7ba9bd" /></svg></span></button>
            </div>
            <div class="flex flex-1 items-center justify-end text-[8px]">
                <svg class="size-[12px]" viewBox="0 0 12 12"><circle cx="6" cy="6" r="5.500" fill="#f8b530" /><circle cx="5" cy="4.500" r="3.500" fill="#fdcb52" /></svg>
                <span class="ml-[5px] w-[27px]">28°C</span>
                <svg class="h-[10px] w-[104px]" viewBox="0 0 104 10" fill="none" stroke="#8d98ac"><path d="M1 6l3-3 3 3M19 3v4M22 2v6M33 2h5v5h-5zM95 2h9" /><path d="M56 3h8v5h-8z" fill="#fff" /><circle cx="79" cy="5" r="3" fill="#e23b3b" stroke="none" /><path d="M92 2h9v5h-9zM94 9h5" /></svg>
                <svg class="ml-[8px] size-[9px]" viewBox="0 0 9 9" fill="none" stroke="#d5dae2" stroke-width=".9"><circle cx="2" cy="6" r="1.500" /><path d="M3 5l4-4 1 1-4 4c2 2 4 0 3-1" /></svg>
                <span class="ml-[11px] text-[9px] font-bold">A</span>
                <svg class="ml-[10px] size-[9px]" viewBox="0 0 9 9"><circle cx="4.500" cy="4" r="4" fill="#1c6ed0" /><circle cx="7" cy="7.500" r="1.500" fill="#f28a2a" /></svg>
                <div class="ml-[8px] w-[40px] text-center text-[7px] leading-[10px]">13:14<br>2021/09/20</div>
                <button aria-label="通知" class="ml-[9px] mr-[14px]"><svg class="size-[10px]" viewBox="0 0 10 10"><path d="M0 0h10v8H8v2L6 8H0z" fill="#f0f0f0" /><path d="M2 2.500h6M2 4.500h6M2 6.500h3" stroke="#1a2545" stroke-width=".8" /></svg></button>
            </div>
            <p class="absolute bottom-0 right-[135px] whitespace-nowrap font-['Noto_Sans',sans-serif] text-[19px] leading-[20px] text-[#e2e4e8]">© 2021 saym.</p>
        </footer>
    </div>

    <script>
        const cols = 'ABCDEFGHIJKLMNOPQRST'.split('');

        // value, then fill
        const blue = 'bg-[#d9e1f2]', gray = 'bg-[#ededed]';
        const cells = {
            A2: ['No.', blue], A3: ['名前', blue],
            B2: ['1'], C2: ['2'], D2: ['3'], E2: ['4'], F2: ['5'], G2: ['6'], H2: ['7'],
            B3: ['青木', 'bg-[#e3eef9] outline-1 outline-dashed -outline-offset-1 outline-[#2f75b5]'],
            C3: ['井上'], D3: ['上田'], E3: ['江藤'], F3: ['大田'], G3: ['加藤'], H3: ['木下'],
            J2: ['人数', 'bg-[#fce4d6]'],
            J3: ['=COLUMNS(<span class="border-r border-[#555] text-[#5b93d3]">B3</span>', 'outline-1 -outline-offset-1 outline-[#217346]'],
            L2: ['COLUMN関数　例', gray], L3: ['COLUMNS関数　例', gray],
            M2: ['13'], M3: ['3'],
            L5: ['COLUMN関数　例', gray], L6: ['COLUMNS関数　例', gray],
            M5: ['ココの列番号', '[font-feature-settings:\'palt\']'], M6: ['ココから'], N6: [''], O6: ['ココまで'],
            Q2: ['意味', 'bg-[#fff2cc] text-center', 2], R2: null,
            Q3: ['ROW'], R3: ['行'], Q4: ['COLUMN'], R4: ['列(桁)'],
            Q6: ['関連関数', 'bg-[#e2efda] text-center', 2], R6: null,
            Q7: ['ROW'], R7: ['単体'], Q8: ['COLUMN'], R8: ['単体'],
            Q9: ['ROWS'], R9: ['複数'], Q10: ['COLUMNS'], R10: ['複数']
        };

        let head = '<tr class="h-[14px]"><th class="border-b border-r border-[#c4c4c4] bg-[#e6e6e6] p-0"><svg class="ml-auto size-[11px]" viewBox="0 0 11 11"><path d="M10 0v10H0z" fill="#b4b4b4"/></svg></th>';
        cols.forEach(c => {
            const look = c === 'J' ? 'bg-[#d2d2d2] text-[#217346] border-b-[#217346]' : 'bg-[#e6e6e6] border-b-[#c4c4c4]';
            head += `<th class="border-b border-r border-r-[#cfcfcf] p-0 font-normal ${look}">${c === 'T' ? '' : c}</th>`;
        });
        document.getElementById('head').innerHTML = head + '</tr>';

        let html = '';
        for (let r = 1; r <= 29; r++) {
            const look = r === 3 ? 'bg-[#d2d2d2] text-[#217346] border-r-[#217346]' : 'bg-[#e6e6e6] border-r-[#c4c4c4]';
            html += `<tr><th class="border-b border-r border-b-[#cfcfcf] p-0 font-normal ${look}">${r}</th>`;
            cols.forEach((c, i) => {
                const cell = cells[c + r];
                if (cell === null) return;
                const boxed = cell !== undefined;
                const right = boxed || (cols[i + 1] + r) in cells ? 'border-r-[#6b6b6b]' : 'border-r-[#e3e3e3]';
                const bottom = boxed || (c + (r + 1)) in cells ? 'border-b-[#6b6b6b]' : 'border-b-[#e3e3e3]';
                const [text, extra, span] = cell || ['', ''];
                const align = /^\d+$/.test(text) ? 'text-right' : '';
                html += `<td colspan="${span || 1}" class="whitespace-nowrap border-b border-r p-0 pl-px ${right} ${bottom} ${align} ${extra || ''}">${text}</td>`;
            });
            html += '</tr>';
        }
        document.getElementById('rows').innerHTML = html;
    </script>
</body>

</html>
